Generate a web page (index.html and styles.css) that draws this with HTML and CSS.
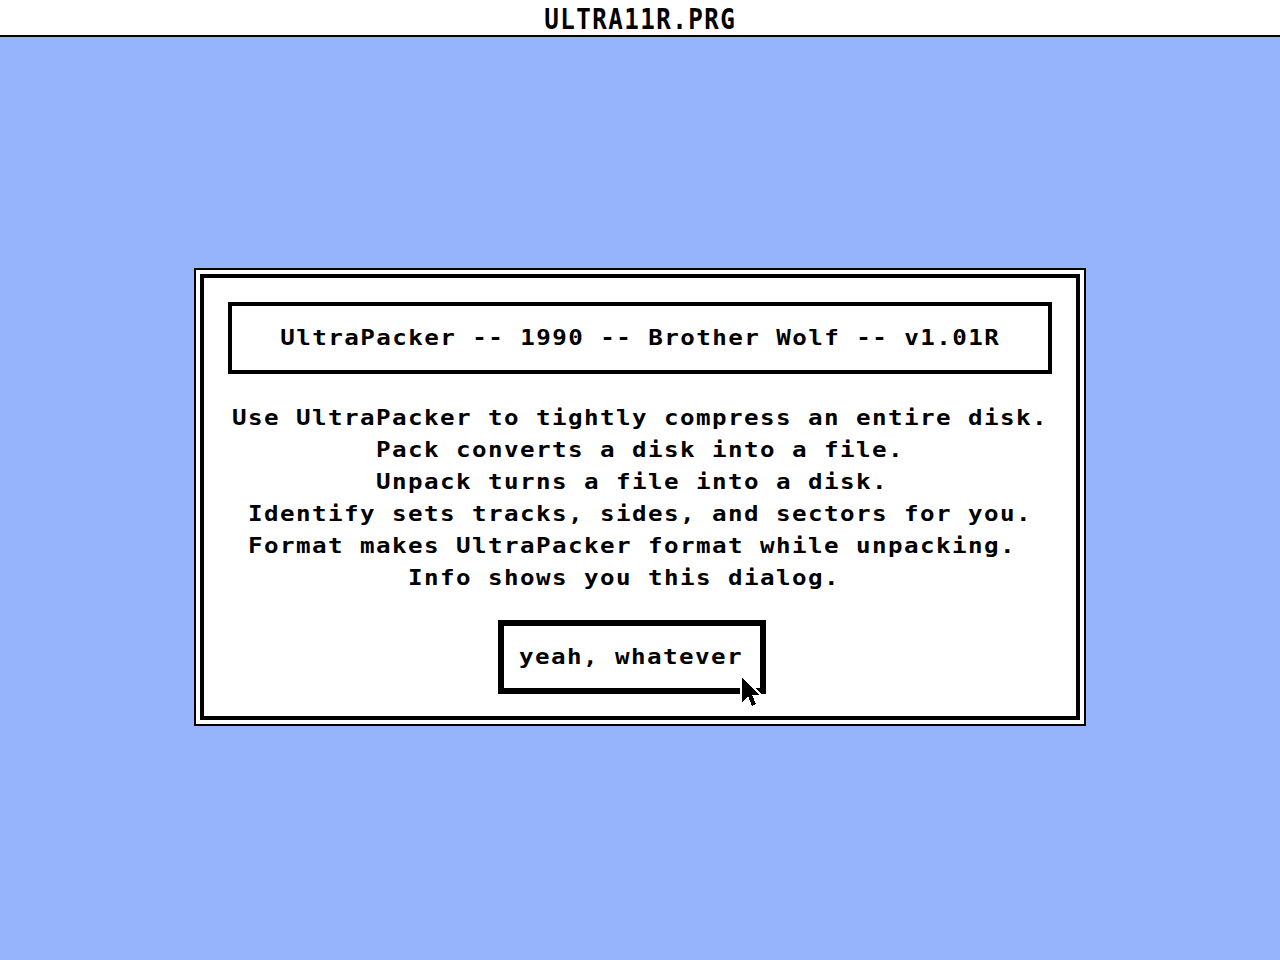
FILE: index.html
```html
<!DOCTYPE html>
<html>
<head>
<meta charset="utf-8">
<title>ULTRA11R.PRG</title>
<link rel="stylesheet" href="styles.css">
</head>
<body>
<header class="titlebar"><span class="title-text">ULTRA11R.PRG</span></header>
<main class="desktop">
  <div class="dialog">
    <div class="dialog-inner">
      <div class="banner"><span class="st-text">UltraPacker -- 1990 -- Brother Wolf -- v1.01R</span></div>
      <pre class="info">Use UltraPacker to tightly compress an entire disk.
         Pack converts a disk into a file.
         Unpack turns a file into a disk.
 Identify sets tracks, sides, and sectors for you.
 Format makes UltraPacker format while unpacking.
           Info shows you this dialog.</pre>
      <div class="button"><span class="st-text button-label">yeah, whatever</span>
        <svg class="cursor" width="24" height="34" viewBox="-1 -1 12 17" shape-rendering="crispEdges">
          <path d="M0 0 L0 12 L3 9 L5 14 L7 13 L5 8.5 L9 8.5 Z" fill="#000" stroke="#fff" stroke-width="2" stroke-linejoin="miter" paint-order="stroke"/>
        </svg>
      </div>
    </div>
  </div>
</main>
</body>
</html>
```
FILE: styles.css
```css
html, body {
  margin: 0;
  padding: 0;
}
body {
  width: 1280px;
  height: 960px;
  background: #96b4fc;
  overflow: hidden;
  font-family: "DejaVu Sans Mono", "Liberation Mono", monospace;
  font-weight: bold;
  color: #000;
}
.titlebar {
  height: 35px;
  background: #fff;
  border-bottom: 2px solid #000;
  display: flex;
  justify-content: center;
  align-items: center;
}
.title-text {
  display: inline-block;
  font-size: 22px;
  letter-spacing: 1.3px;
  line-height: 22px;
  transform: translateY(2px) scale(1.1, 1.25);
}
.desktop {
  display: flex;
  justify-content: center;
  padding-top: 231px;
}
.dialog {
  width: 892px;
  height: 458px;
  box-sizing: border-box;
  border: 2px solid #000;
  padding: 4px;
  background: #fff;
}
.dialog-inner {
  height: 100%;
  box-sizing: border-box;
  border: 4px solid #000;
  padding: 24px;
  display: flex;
  flex-direction: column;
  align-items: center;
}
.st-text {
  display: inline-block;
  font-size: 22px;
  letter-spacing: 1.3px;
  transform: scaleX(1.1);
}
.banner {
  align-self: stretch;
  height: 72px;
  box-sizing: border-box;
  border: 4px solid #000;
  line-height: 64px;
  text-align: center;
}
.info {
  margin: 28px 0 0 0;
  width: 742px;
  font-family: inherit;
  font-size: 22px;
  letter-spacing: 1.3px;
  line-height: 32px;
  white-space: pre;
  text-align: left;
  transform: scaleX(1.1);
  transform-origin: center;
}
.button {
  position: relative;
  align-self: flex-start;
  margin-top: 26px;
  margin-left: 270px;
  width: 268px;
  height: 74px;
  box-sizing: border-box;
  border: 6px solid #000;
  padding-left: 15px;
  line-height: 62px;
  white-space: nowrap;
}
.button-label {
  transform-origin: left center;
}
.cursor {
  position: absolute;
  left: 236px;
  top: 50px;
}
```
